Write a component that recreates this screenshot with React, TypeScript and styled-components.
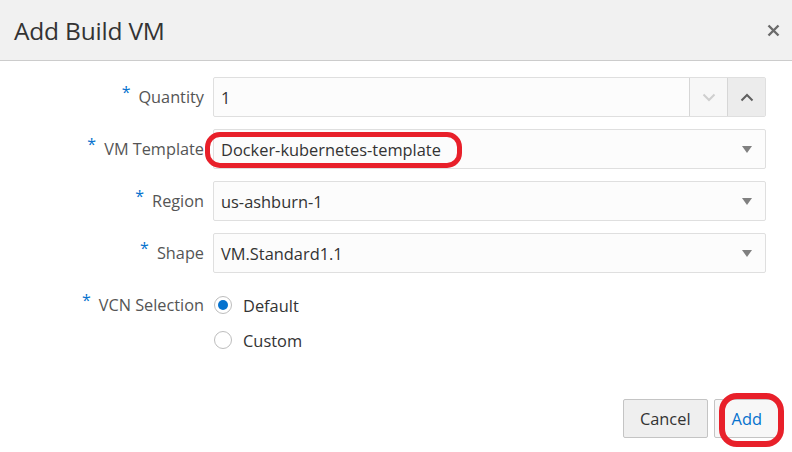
import styled, { createGlobalStyle } from "styled-components";

const GlobalStyle = createGlobalStyle`
  html, body {
    margin: 0;
    padding: 0;
    background: #ffffff;
  }
  body {
    font-family: "Open Sans", "Noto Sans", sans-serif;
    color: #333333;
    overflow: hidden;
  }
`;

const Dialog = styled.div`
  width: 792px;
  height: 452px;
  display: flex;
  flex-direction: column;
  background: #ffffff;
`;

const Header = styled.div`
  height: 60px;
  display: flex;
  align-items: center;
  justify-content: space-between;
  padding: 0 11px 0 14px;
  background: #f1f1f1;
  border-bottom: 1px solid #cccccc;
`;

const Title = styled.h1`
  margin: 0;
  font-size: 24.5px;
  font-weight: 400;
  color: #333333;
  letter-spacing: -0.2px;
`;

const CloseBtn = styled.button`
  border: none;
  background: none;
  padding: 0;
  width: 15px;
  height: 15px;
  display: flex;
  align-items: center;
  justify-content: center;
  cursor: pointer;
`;

const Form = styled.div`
  display: grid;
  grid-template-columns: 204px 553px;
  grid-auto-rows: 40px;
  column-gap: 9px;
  row-gap: 12px;
  padding-top: 16px;
  align-items: center;
`;

const Label = styled.label<{ $top?: boolean }>`
  justify-self: end;
  align-self: ${(p) => (p.$top ? "start" : "center")};
  margin-top: ${(p) => (p.$top ? "9px" : "0")};
  font-size: 16.3px;
  color: #555555;
  white-space: nowrap;
`;

const Req = styled.span`
  color: #0572ce;
  font-size: 16px;
  position: relative;
  top: -5px;
  margin-right: 8px;
`;

const Field = styled.div`
  position: relative;
  height: 40px;
  display: flex;
  align-items: center;
  box-sizing: border-box;
  border: 1px solid #dfdfdf;
  border-radius: 2px;
  background: #fcfcfc;
`;

const Value = styled.span`
  flex: 1;
  padding-left: 7px;
  font-size: 16.4px;
  color: #333333;
`;

const SpinBtn = styled.div<{ $active?: boolean }>`
  width: 37px;
  height: 100%;
  display: flex;
  align-items: center;
  justify-content: center;
  border-left: 1px solid #d6d6d6;
  background: ${(p) => (p.$active ? "#ececec" : "#f7f7f7")};
`;

const Arrow = styled.span`
  width: 0;
  height: 0;
  margin-right: 13px;
  border-left: 5px solid transparent;
  border-right: 5px solid transparent;
  border-top: 7px solid #808080;
`;

const Highlight = styled.div<{ $w: number }>`
  position: absolute;
  left: -9px;
  top: 2px;
  width: ${(p) => p.$w}px;
  height: 36px;
  box-sizing: border-box;
  border: 5px solid #e8202a;
  border-radius: 15px;
  pointer-events: none;
`;

const RadioGroup = styled.div`
  grid-row: span 2;
  align-self: start;
  display: flex;
  flex-direction: column;
  gap: 15px;
  padding-top: 10px;
`;

const RadioItem = styled.label`
  display: flex;
  align-items: center;
  gap: 11px;
  font-size: 16.4px;
  color: #333333;
  height: 20px;
  margin-left: 1px;
`;

const RadioCircle = styled.span<{ $checked?: boolean }>`
  width: 18px;
  height: 18px;
  box-sizing: border-box;
  border-radius: 50%;
  border: 1px solid #bdbdbd;
  background: #ffffff;
  display: flex;
  align-items: center;
  justify-content: center;

  &::after {
    content: "";
    width: 10px;
    height: 10px;
    border-radius: 50%;
    background: ${(p) => (p.$checked ? "#0572ce" : "transparent")};
  }
`;

const Footer = styled.div`
  margin-top: auto;
  display: flex;
  justify-content: flex-end;
  gap: 6px;
  padding: 0 12px 14px 0;
`;

const Button = styled.button<{ $primary?: boolean }>`
  position: relative;
  height: 39px;
  padding: 0 ${(p) => (p.$primary ? "17px" : "16px")};
  font-family: "Open Sans", "Noto Sans", sans-serif;
  font-size: 16.4px;
  color: ${(p) => (p.$primary ? "#0572ce" : "#333333")};
  background: ${(p) => (p.$primary ? "#f7f7f7" : "#efefef")};
  border: 1px solid #c4c4c4;
  border-radius: 2px;
`;

const ButtonRing = styled.span`
  position: absolute;
  left: 4px;
  top: -7px;
  width: 65px;
  height: 54px;
  box-sizing: border-box;
  border: 6px solid #e8202a;
  border-radius: 18px;
  pointer-events: none;
`;

const Chevron = ({ up, color }: { up?: boolean; color: string }) => (
  <svg width="14" height="9" viewBox="0 0 14 9">
    <path
      d={up ? "M1.5 7.5 L7 2 L12.5 7.5" : "M1.5 1.5 L7 7 L12.5 1.5"}
      fill="none"
      stroke={color}
      strokeWidth="2"
    />
  </svg>
);

const rows = [
  { label: "VM Template", value: "Docker-kubernetes-template", mark: true },
  { label: "Region", value: "us-ashburn-1" },
  { label: "Shape", value: "VM.Standard1.1" },
];

export default function App() {
  return (
    <>
      <GlobalStyle />
      <Dialog>
        <Header>
          <Title>Add Build VM</Title>
          <CloseBtn aria-label="Close">
            <svg width="13" height="13" viewBox="0 0 13 13">
              <path
                d="M1.5 1.5 L11.5 11.5 M11.5 1.5 L1.5 11.5"
                stroke="#6b6b6b"
                strokeWidth="2.4"
              />
            </svg>
          </CloseBtn>
        </Header>
        <Form>
          <Label>
            <Req>*</Req>Quantity
          </Label>
          <Field>
            <Value>1</Value>
            <SpinBtn>
              <Chevron color="#cfcfcf" />
            </SpinBtn>
            <SpinBtn $active>
              <Chevron up color="#5f5f5f" />
            </SpinBtn>
          </Field>
          {rows.map((r) => [
            <Label key={r.label + "-l"}>
              <Req>*</Req>
              {r.label}
            </Label>,
            <Field key={r.label + "-f"}>
              <Value>{r.value}</Value>
              <Arrow />
              {r.mark && <Highlight $w={257} />}
            </Field>,
          ])}
          <Label $top>
            <Req>*</Req>VCN Selection
          </Label>
          <RadioGroup>
            <RadioItem>
              <RadioCircle $checked />
              Default
            </RadioItem>
            <RadioItem>
              <RadioCircle />
              Custom
            </RadioItem>
          </RadioGroup>
        </Form>
        <Footer>
          <Button>Cancel</Button>
          <Button $primary>
            Add
            <ButtonRing />
          </Button>
        </Footer>
      </Dialog>
    </>
  );
}
